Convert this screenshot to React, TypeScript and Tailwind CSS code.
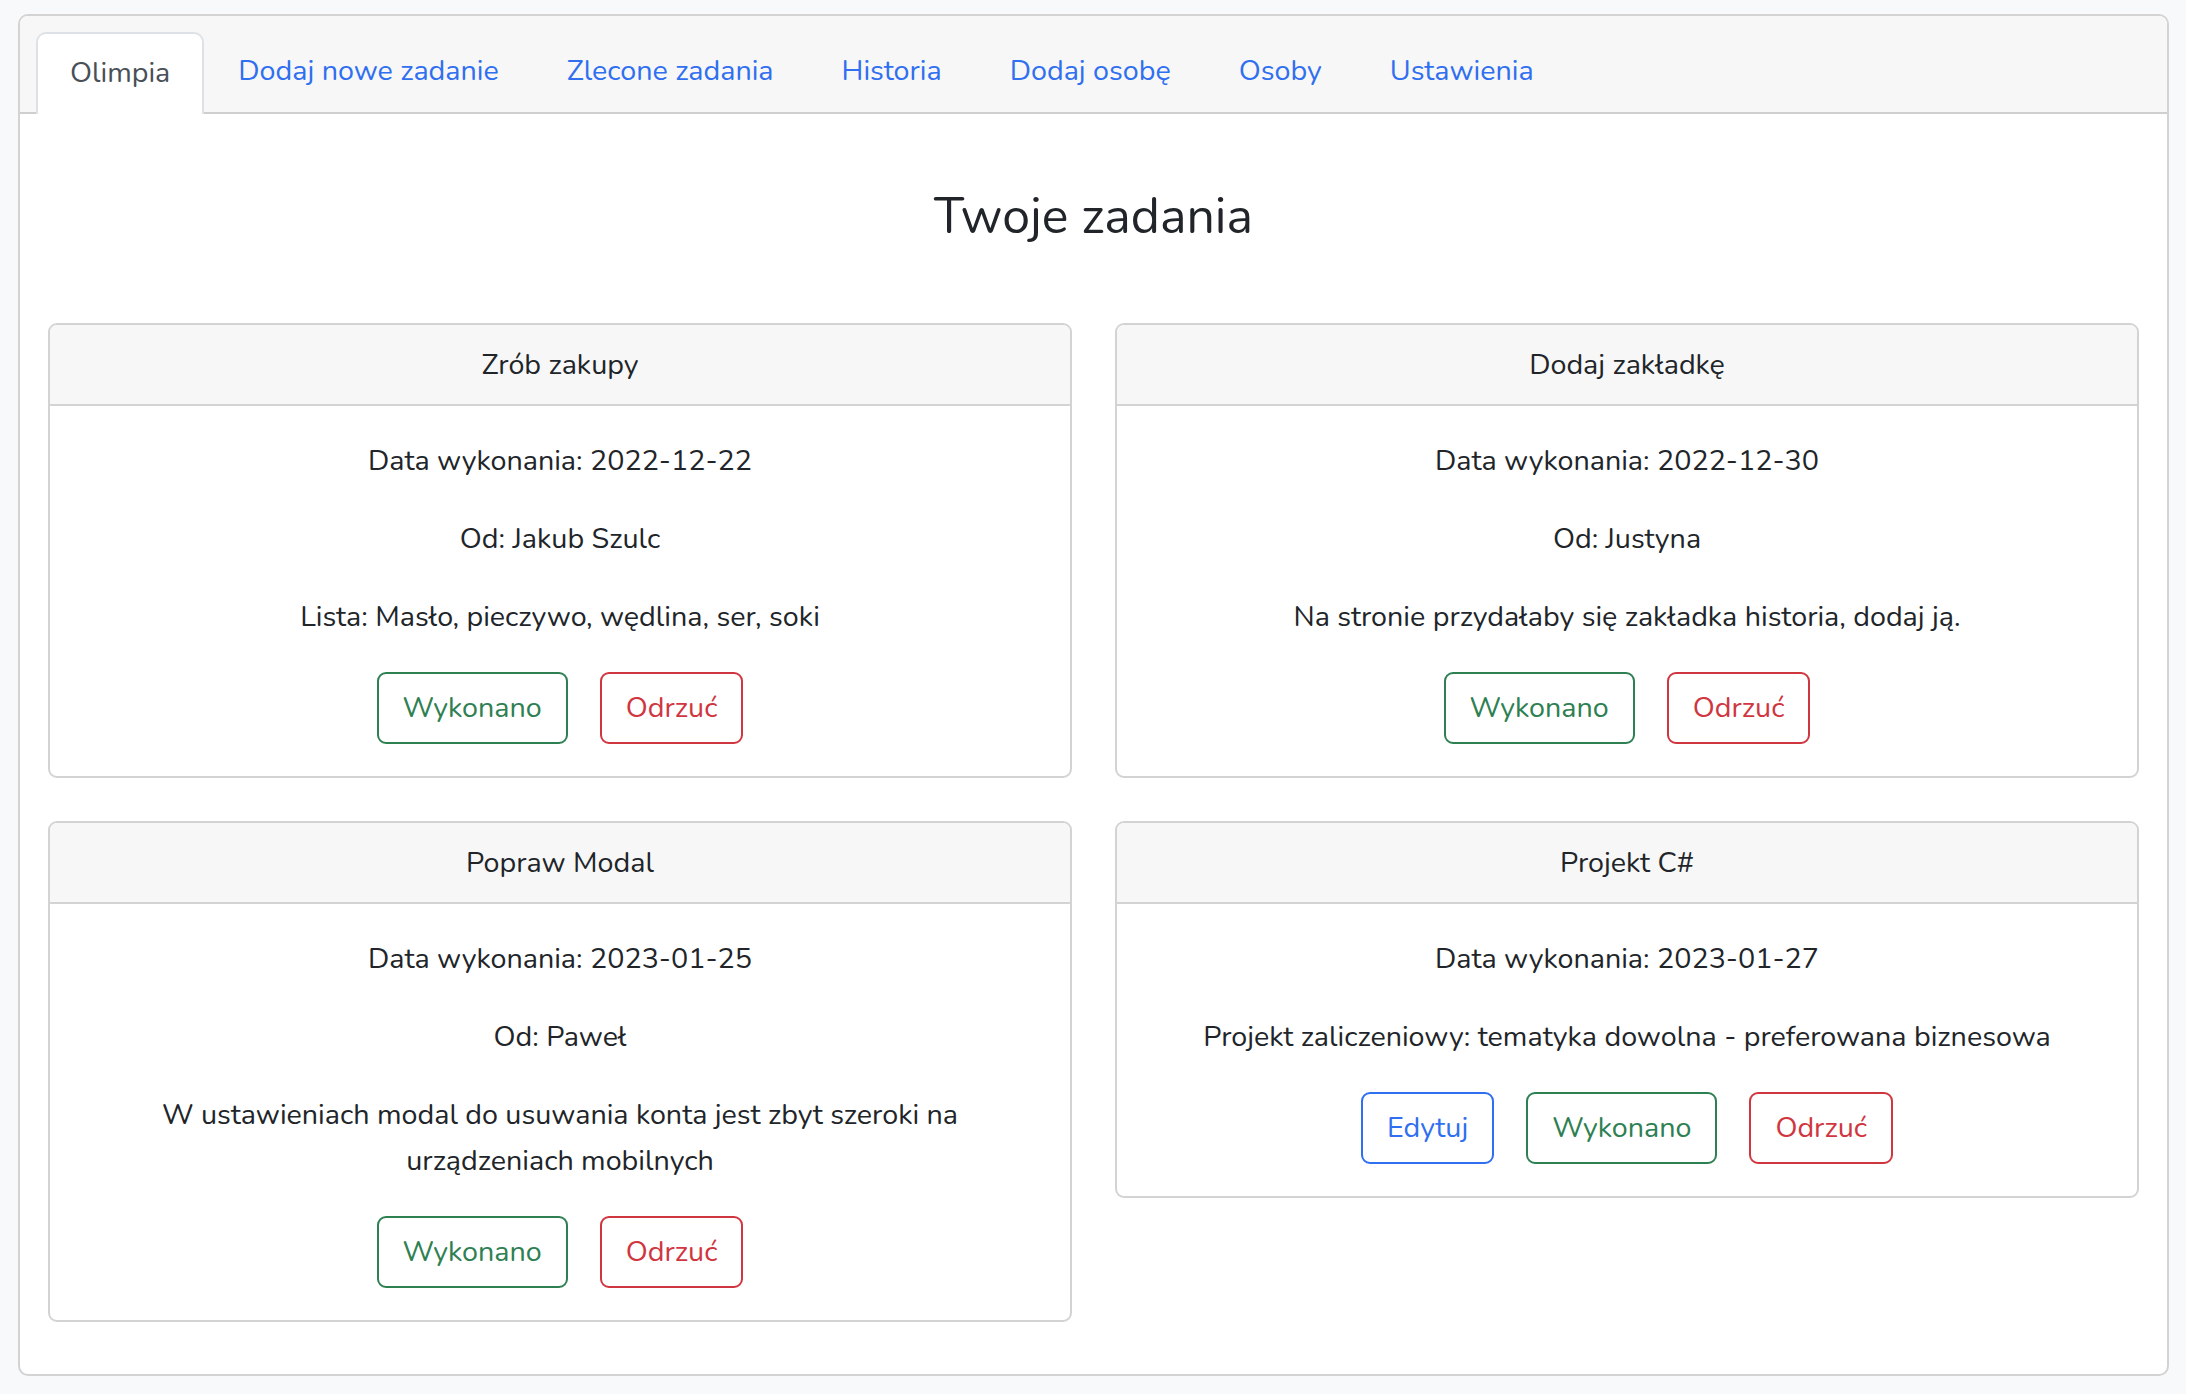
import React from 'react';

type Task = {
  title: string;
  lines: string[];
  editable?: boolean;
};

const tabs = ['Dodaj nowe zadanie', 'Zlecone zadania', 'Historia', 'Dodaj osobę', 'Osoby', 'Ustawienia'];

const tasks: Task[] = [
  {
    title: 'Zrób zakupy',
    lines: ['Data wykonania: 2022-12-22', 'Od: Jakub Szulc', 'Lista: Masło, pieczywo, wędlina, ser, soki'],
  },
  {
    title: 'Dodaj zakładkę',
    lines: ['Data wykonania: 2022-12-30', 'Od: Justyna', 'Na stronie przydałaby się zakładka historia, dodaj ją.'],
  },
  {
    title: 'Popraw Modal',
    lines: [
      'Data wykonania: 2023-01-25',
      'Od: Paweł',
      'W ustawieniach modal do usuwania konta jest zbyt szeroki na urządzeniach mobilnych',
    ],
  },
  {
    title: 'Projekt C#',
    lines: ['Data wykonania: 2023-01-27', 'Projekt zaliczeniowy: tematyka dowolna - preferowana biznesowa'],
    editable: true,
  },
];

const TaskCard: React.FC<{ task: Task }> = ({ task }) => (
  <div className="rounded-[9px] border-2 border-[#d3d3d3] bg-white overflow-hidden">
    <div className="bg-[#f7f7f7] border-b-2 border-[#d3d3d3] pt-[17px] pb-[16px] text-center leading-[46px]">
      {task.title}
    </div>
    <div className="px-[32px] pt-[32px] pb-[32px] text-center">
      {task.lines.map((line) => (
        <p key={line} className="mb-[32px] leading-[46px]">
          {line}
        </p>
      ))}
      <div className="flex justify-center gap-[32px]">
        {task.editable && (
          <button className="rounded-[9px] border-2 border-[#2f6ff0] text-[#2f6ff0] px-[24px] py-[11px] leading-[46px]">
            Edytuj
          </button>
        )}
        <button className="rounded-[9px] border-2 border-[#2e8052] text-[#2e8052] px-[24px] py-[11px] leading-[46px]">
          Wykonano
        </button>
        <button className="rounded-[9px] border-2 border-[#d0363f] text-[#d0363f] px-[24px] py-[11px] leading-[46px]">
          Odrzuć
        </button>
      </div>
    </div>
  </div>
);

export default function App() {
  return (
    <div className="min-h-screen bg-[#f8f9fa] pt-[14px] pl-[18px] pr-[17px] pb-[20px] text-[#212529] text-[28.7px] font-['Nunito','Lato',sans-serif]">
      <div className="rounded-[10px] border-2 border-[#d3d3d3] bg-white overflow-hidden">
        {/* zakładki */}
        <div className="bg-[#f7f7f7] border-b-2 border-[#cfcfcf] pt-[16px] pl-[16px] flex items-end">
          <div className="-mb-[2px] bg-white border-2 border-b-0 border-[#dee2e6] rounded-t-[10px] px-[32px] pt-[16px] pb-[18px] leading-[46px] text-[#495057]">
            Olimpia
          </div>
          {tabs.map((t) => (
            <a key={t} href="#" className="px-[34px] pt-[16px] pb-[18px] leading-[46px] text-[#2f6ff0]">
              {t}
            </a>
          ))}
        </div>

        <div className="px-[28px] pt-[72px] pb-[52px]">
          <h2 className="text-center text-[50px] leading-[61px] mb-[76px]">Twoje zadania</h2>
          <div className="grid grid-cols-2 gap-[43px] items-start">
            {tasks.map((task) => (
              <TaskCard key={task.title} task={task} />
            ))}
          </div>
        </div>
      </div>
    </div>
  );
}
